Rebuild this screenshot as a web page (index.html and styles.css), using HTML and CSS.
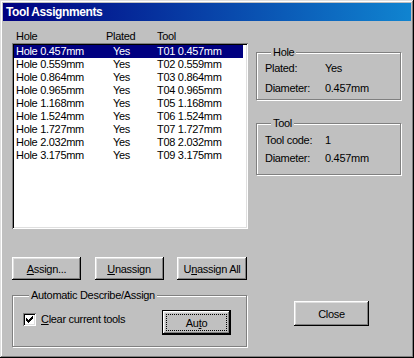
FILE: index.html
```html
<!DOCTYPE html>
<html>
<head>
<meta charset="utf-8">
<link rel="stylesheet" href="styles.css">
</head>
<body>
<div class="window">
  <div class="titlebar"><span class="title">Tool Assignments</span></div>
  <div class="body">
    <div class="left-top">
      <div class="list-head"><span>Hole</span><span>Plated</span><span>Tool</span></div>
      <div class="listbox">
        <div class="row sel"><span>Hole 0.457mm</span><span class="yes">Yes</span><span>T01 0.457mm</span></div>
        <div class="row"><span>Hole 0.559mm</span><span class="yes">Yes</span><span>T02 0.559mm</span></div>
        <div class="row"><span>Hole 0.864mm</span><span class="yes">Yes</span><span>T03 0.864mm</span></div>
        <div class="row"><span>Hole 0.965mm</span><span class="yes">Yes</span><span>T04 0.965mm</span></div>
        <div class="row"><span>Hole 1.168mm</span><span class="yes">Yes</span><span>T05 1.168mm</span></div>
        <div class="row"><span>Hole 1.524mm</span><span class="yes">Yes</span><span>T06 1.524mm</span></div>
        <div class="row"><span>Hole 1.727mm</span><span class="yes">Yes</span><span>T07 1.727mm</span></div>
        <div class="row"><span>Hole 2.032mm</span><span class="yes">Yes</span><span>T08 2.032mm</span></div>
        <div class="row"><span>Hole 3.175mm</span><span class="yes">Yes</span><span>T09 3.175mm</span></div>
      </div>
    </div>
    <div class="right-top">
      <fieldset class="group hole">
        <legend>Hole</legend>
        <div class="info r1"><span>Plated:</span><span>Yes</span></div>
        <div class="info r2"><span>Diameter:</span><span>0.457mm</span></div>
      </fieldset>
      <fieldset class="group tool">
        <legend>Tool</legend>
        <div class="info r1"><span>Tool code:</span><span>1</span></div>
        <div class="info r2"><span>Diameter:</span><span>0.457mm</span></div>
      </fieldset>
    </div>
    <div class="buttons">
      <button class="btn"><u>A</u>ssign...</button>
      <button class="btn"><u>U</u>nassign</button>
      <button class="btn wide">U<u>n</u>assign All</button>
    </div>
    <div></div>
    <fieldset class="group auto">
      <legend>Automatic Describe/Assign</legend>
      <div class="auto-row">
        <label class="check">
          <span class="box"><svg width="7" height="7" viewBox="0 0 7 7" shape-rendering="crispEdges"><path d="M0 2h1v3H0zM1 3h1v3H1zM2 4h1v3H2zM3 3h1v3H3zM4 2h1v3H4zM5 1h1v3H5zM6 0h1v3H6z" fill="#000"/></svg></span>
          <span><u>C</u>lear current tools</span>
        </label>
        <button class="btn default">Au<u>t</u>o</button>
      </div>
    </fieldset>
    <div class="close-cell"><button class="btn close">Close</button></div>
  </div>
</div>
</body>
</html>
```

FILE: styles.css
```css
html, body {
  margin: 0;
  padding: 0;
  background: #c0c0c0;
}

.window {
  width: 414px;
  height: 358px;
  box-sizing: border-box;
  padding: 3px;
  background: #c0c0c0;
  box-shadow: inset -1px -1px #000, inset 1px 1px #dfdfdf, inset -2px -2px #808080, inset 2px 2px #fff;
  font-family: "Liberation Sans", Arial, sans-serif;
  font-size: 11px;
  letter-spacing: -0.3px;
  color: #000;
}

.titlebar {
  height: 18px;
  display: flex;
  align-items: center;
  padding-left: 3px;
  background: linear-gradient(to right, #000080, #1084d0);
}

.title {
  color: #fff;
  font-weight: bold;
  font-size: 12px;
  letter-spacing: -0.4px;
}

.body {
  display: grid;
  grid-template-columns: 236px 146px;
  column-gap: 8px;
  padding-left: 9px;
  align-items: start;
}

.left-top {
  padding-top: 9px;
}

.list-head,
.row {
  display: grid;
  grid-template-columns: 90px 51px 1fr;
  line-height: 13px;
  height: 13px;
  white-space: nowrap;
}

.list-head {
  padding-left: 4px;
}

.listbox {
  height: 186px;
  box-sizing: border-box;
  padding: 2px;
  background: #fff;
  box-shadow: inset 1px 1px #808080, inset -1px -1px #fff, inset 2px 2px #000, inset -2px -2px #dfdfdf;
}

.row {
  padding-left: 2px;
  margin-right: 3px;
}

.row .yes {
  padding-left: 7px;
}

.row.sel {
  background: #000080;
  color: #fff;
}

.right-top {
  padding-top: 25px;
}

.group {
  margin: 0;
  padding: 0 0 0 8px;
  border: 1px solid #808080;
  box-shadow: inset 1px 1px #fff, 1px 1px #fff;
  min-width: 0;
}

.group legend {
  margin-left: 6px;
  padding: 0 2px;
  line-height: 13px;
  background: #c0c0c0;
}

.hole {
  width: 145px;
  box-sizing: border-box;
  padding-bottom: 4px;
}

.tool {
  width: 145px;
  box-sizing: border-box;
  margin-top: 17px;
  padding-bottom: 9px;
}

.info {
  display: grid;
  grid-template-columns: 60px auto;
  line-height: 13px;
  white-space: nowrap;
}

.hole .r1 { margin-top: 3px; }
.hole .r2 { margin-top: 7px; }
.tool .r1 { margin-top: 4px; }
.tool .r2 { margin-top: 5px; }

.buttons {
  grid-column: 1;
  margin-top: 28px;
  display: flex;
  justify-content: space-between;
  width: 235px;
}

.btn {
  width: 69px;
  height: 23px;
  padding: 0;
  border: none;
  background: #c0c0c0;
  box-shadow: inset -1px -1px #000, inset 1px 1px #fff, inset -2px -2px #808080, inset 2px 2px #dfdfdf;
  font-family: "Liberation Sans", Arial, sans-serif;
  font-size: 11px;
  letter-spacing: -0.3px;
  color: #000;
  white-space: nowrap;
}

.btn.wide {
  width: 70px;
}

.auto {
  width: 235px;
  box-sizing: border-box;
  margin-top: 9px;
  padding: 8px 15px 11px 10px;
}

.auto-row {
  display: flex;
  align-items: flex-start;
}

.check {
  display: flex;
  align-items: center;
  gap: 5px;
  margin-top: 3px;
  line-height: 13px;
  white-space: nowrap;
}

.box {
  width: 13px;
  height: 13px;
  box-sizing: border-box;
  display: flex;
  align-items: center;
  justify-content: center;
  background: #fff;
  box-shadow: inset 1px 1px #808080, inset -1px -1px #fff, inset 2px 2px #000, inset -2px -2px #dfdfdf;
}

.box svg {
  display: block;
}

.btn.default {
  margin-left: auto;
  width: 69px;
  height: 25px;
  border: 1px solid #000;
  outline: 1px dotted #000;
  outline-offset: -5px;
}

.close-cell {
  margin-top: 21px;
  padding-left: 38px;
}

.btn.close {
  width: 75px;
  height: 25px;
}
```
